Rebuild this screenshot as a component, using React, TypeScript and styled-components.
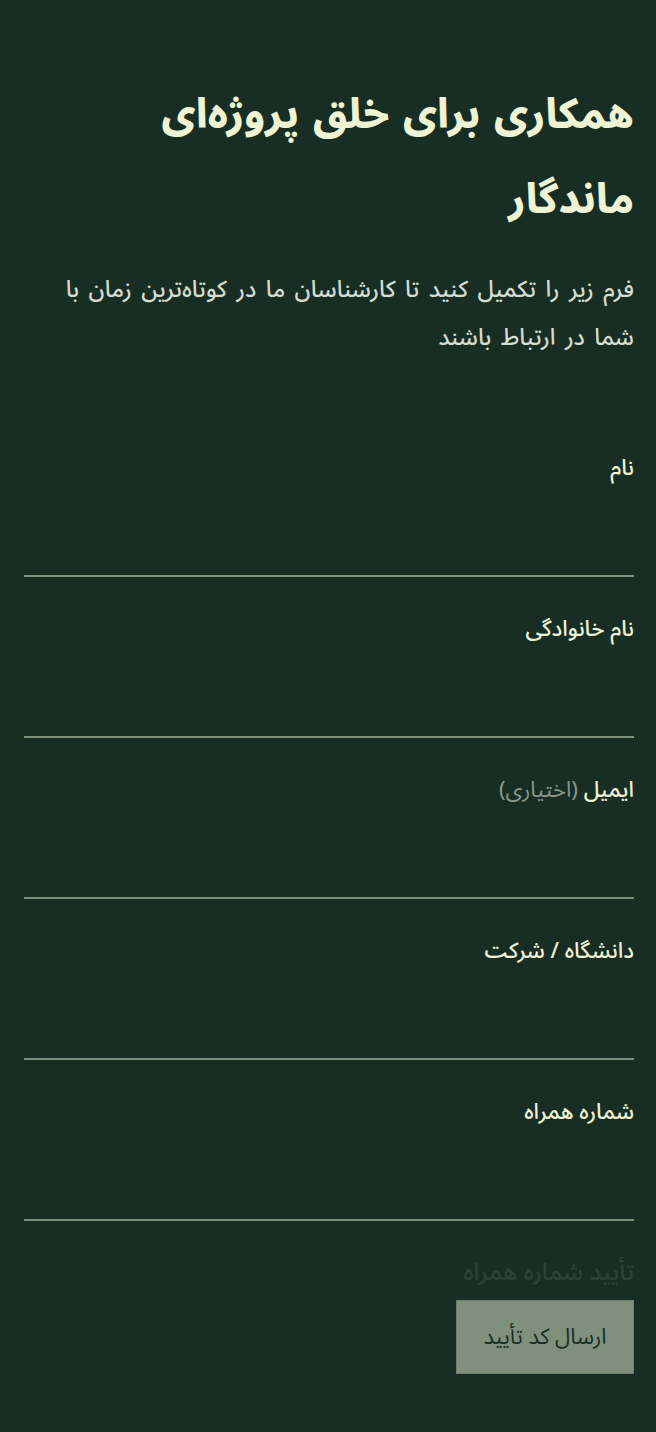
import React from "react";
import styled, { createGlobalStyle } from "styled-components";

const Global = createGlobalStyle`
  html, body { margin: 0; padding: 0; background: #182e25; }
  body { font-family: "Noto Sans Arabic", "Noto Sans", "DejaVu Sans", sans-serif; }
`;

const Page = styled.div`
  direction: rtl;
  background: #182e25;
  min-height: 1432px;
  padding: 73px 22px 0 24px;
  box-sizing: border-box;
`;

const Title = styled.h1`
  margin: 0;
  max-width: 560px;
  font-size: 41px;
  line-height: 85px;
  font-weight: 800;
  word-spacing: 3px;
  color: #eef3d4;
`;

const Subtitle = styled.p`
  margin: 23px 0 0;
  font-size: 23px;
  line-height: 48px;
  font-weight: 500;
  word-spacing: 3.5px;
  color: #d6dccf;
`;

const Form = styled.form`
  display: flex;
  flex-direction: column;
  gap: 37px;
  margin-top: 91px;
`;

const Field = styled.div`
  display: flex;
  flex-direction: column;
`;

const Label = styled.label`
  font-size: 22px;
  line-height: 30px;
  font-weight: 500;
  color: #eef3d4;
`;

const Optional = styled.span`
  color: #8a998a;
  font-weight: 400;
`;

const Input = styled.input`
  box-sizing: border-box;
  background: transparent;
  border: none;
  border-bottom: 2px solid #7e8f7c;
  height: 94px;
  padding: 0;
  outline: none;
  color: #eef3d4;
  font-size: 20px;
`;

const Verify = styled.div`
  display: flex;
  flex-direction: column;
  align-items: flex-start;
  gap: 12px;
`;

const MutedLabel = styled.div`
  font-size: 24px;
  line-height: 30px;
  font-weight: 500;
  color: #2d4236;
`;

const Button = styled.button`
  width: 178px;
  height: 74px;
  background: #7f917c;
  border: 1px solid #6c7d69;
  color: #182e25;
  font-family: inherit;
  font-size: 22px;
  font-weight: 400;
`;

const fields = [
  { label: "نام" },
  { label: "نام خانوادگی" },
  { label: "ایمیل", optional: "(اختیاری)" },
  { label: "دانشگاه / شرکت" },
  { label: "شماره همراه" },
];

export default function App() {
  return (
    <Page>
      <Global />
      <Title>همکاری برای خلق پروژه‌ای ماندگار</Title>
      <Subtitle>
        فرم زیر را تکمیل کنید تا کارشناسان ما در کوتاه‌ترین زمان با شما در ارتباط باشند
      </Subtitle>
      <Form>
        {fields.map((f) => (
          <Field key={f.label}>
            <Label>
              {f.label} {f.optional && <Optional>{f.optional}</Optional>}
            </Label>
            <Input type="text" />
          </Field>
        ))}
        <Verify>
          <MutedLabel>تأیید شماره همراه</MutedLabel>
          <Button type="button">ارسال کد تأیید</Button>
        </Verify>
      </Form>
    </Page>
  );
}
